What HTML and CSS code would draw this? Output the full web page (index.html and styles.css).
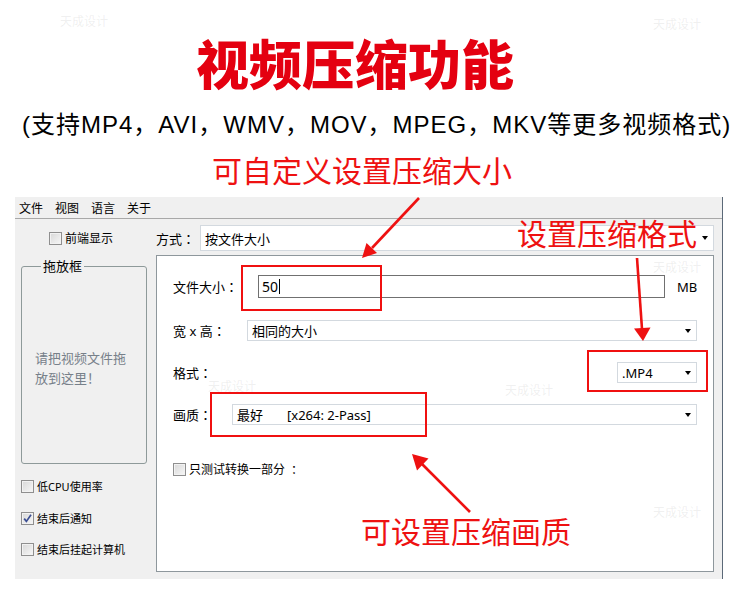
FILE: index.html
```html
<!DOCTYPE html>
<html>
<head>
    <title>视频压缩功能</title>
    <link rel="stylesheet" href="styles.css">
</head>
<body>
<div class="page">
    <header class="head">
        <h1 class="title">视频压缩功能</h1>
        <p class="subtitle">(支持MP4，AVI，WMV，MOV，MPEG，MKV等更多视频格式)</p>
        <p class="tip">可自定义设置压缩大小</p>
    </header>

    <div class="window">
        <nav class="menubar">
            <span>文件</span>
            <span>视图</span>
            <span>语言</span>
            <span>关于</span>
        </nav>
        <div class="client">
            <aside class="side">
                <label class="check front"><span class="box"></span>前端显示</label>
                <fieldset class="dropzone">
                    <legend>拖放框</legend>
                    <p>请把视频文件拖<br>放到这里！</p>
                </fieldset>
                <div class="side-options">
                    <label class="check small"><span class="box"></span>低CPU使用率</label>
                    <label class="check small">
                        <span class="box">
                            <svg width="11" height="11" viewBox="0 0 11 11"><path d="M2.2 5.6 L4.4 8.4 L9 1.8" fill="none" stroke="#3c4f93" stroke-width="1.7"/></svg>
                        </span>结束后通知
                    </label>
                    <label class="check small"><span class="box"></span>结束后挂起计算机</label>
                </div>
            </aside>

            <section class="main">
                <div class="mode">
                    <span class="label">方式<span class="colon">：</span></span>
                    <div class="combo combo-mode">按文件大小</div>
                </div>
                <div class="panel">
                    <div class="row row-size">
                        <span class="label">文件大小<span class="colon">：</span></span>
                        <div class="input">50<span class="caret"></span></div>
                        <span class="unit">MB</span>
                    </div>
                    <div class="row">
                        <span class="label">宽 x 高<span class="colon">：</span></span>
                        <div class="combo combo-dim">相同的大小</div>
                    </div>
                    <div class="row">
                        <span class="label">格式<span class="colon">：</span></span>
                        <div class="combo combo-format">.MP4</div>
                    </div>
                    <div class="row">
                        <span class="label">画质<span class="colon">：</span></span>
                        <div class="combo combo-quality">最好<span class="codec">[x264: 2-Pass]</span></div>
                    </div>
                    <label class="check part"><span class="box"></span>只测试转换一部分<span class="colon">：</span></label>
                </div>
            </section>
        </div>
    </div>

    <!-- annotations drawn over the screenshot -->
    <div class="mark mark-size"></div>
    <div class="mark mark-format"></div>
    <div class="mark mark-quality"></div>
    <span class="note note-format">设置压缩格式</span>
    <span class="note note-quality">可设置压缩画质</span>

    <svg class="arrows" width="750" height="600" viewBox="0 0 750 600">
        <g stroke="#ee1111" stroke-width="2.6" fill="none">
            <line x1="419" y1="198" x2="372" y2="248"/>
            <line x1="637" y1="258" x2="642" y2="329"/>
            <line x1="470" y1="512" x2="422" y2="464"/>
        </g>
        <g fill="#ee1111">
            <polygon points="362,258 377,253 366.5,243"/>
            <polygon points="643,341 650.5,327.4 634,328.6"/>
            <polygon points="412,454 428.5,458.5 417,470.5"/>
        </g>
    </svg>

    <span class="wm" style="left:60px;top:13px">天成设计</span>
    <span class="wm" style="left:653px;top:16px">天成设计</span>
    <span class="wm" style="left:653px;top:259px">天成设计</span>
    <span class="wm" style="left:208px;top:378px">天成设计</span>
    <span class="wm" style="left:505px;top:382px">天成设计</span>
    <span class="wm" style="left:653px;top:504px">天成设计</span>
</div>
</body>
</html>
```

FILE: styles.css
```css
body {
    margin: 0;
    background: #fff;
    font-family: "Noto Sans", "Noto Sans CJK SC", sans-serif;
    color: #000;
}
.page {
    position: relative;
    width: 750px;
    height: 600px;
    overflow: hidden;
}

/* heading */
.head {
    padding-top: 36px;
}
.title {
    margin: 0 0 0 196px;
    font-family: "Noto Sans CJK SC", sans-serif;
    font-size: 53px;
    line-height: 53px;
    font-weight: 900;
    color: #e40010;
}
.subtitle {
    margin: 21px 0 0 22px;
    font-family: "Liberation Sans", "Noto Sans CJK SC", sans-serif;
    font-size: 24px;
    line-height: 30px;
    letter-spacing: 1px;
    white-space: nowrap;
}
.tip {
    margin: 14px 0 0 212px;
    font-family: "Noto Sans CJK SC", sans-serif;
    font-size: 30px;
    line-height: 30px;
    color: #ee1111;
}

/* app window */
.window {
    margin: 13px 0 0 15px;
    width: 708px;
    height: 382px;
    box-sizing: border-box;
    background: #f0f0f0;
    border-right: 1px solid #5b6978;
}
.menubar {
    display: flex;
    gap: 12px;
    height: 21px;
    padding-left: 4px;
    border-bottom: 1px solid #a8a8a8;
    align-items: center;
    font-size: 12px;
}
.client {
    display: flex;
}
.side {
    width: 141px;
    padding-left: 6px;
    box-sizing: border-box;
}
.main {
    flex: 1;
    padding-right: 8px;
}

/* centred full-width colon, as on the Windows UI font */
.colon {
    font-family: "Noto Sans CJK JP", sans-serif;
}

/* checkboxes */
.check {
    display: flex;
    align-items: center;
    gap: 3px;
    height: 13px;
    font-size: 12px;
    line-height: 13px;
    white-space: nowrap;
}
.check.small {
    font-size: 11px;
}
.box {
    display: flex;
    align-items: center;
    justify-content: center;
    width: 13px;
    height: 13px;
    box-sizing: border-box;
    border: 1px solid #8f8f8f;
    background: linear-gradient(135deg, #d8d8d8, #f7f7f7);
    box-shadow: inset 0 0 0 1px #f2f2f2;
    flex: none;
}
.front {
    margin-top: 13px;
    padding-left: 28px;
}
.side-options {
    display: flex;
    flex-direction: column;
    gap: 18.5px;
    margin-top: 16px;
}

/* drop box */
.dropzone {
    margin: 13px 0 0;
    padding: 0 0 0 13px;
    width: 126px;
    height: 206px;
    box-sizing: border-box;
    border: 1px solid #8e9a9a;
    border-radius: 3px;
    min-inline-size: 0;
}
.dropzone legend {
    margin-left: 6px;
    padding: 0 2px;
    font-size: 13px;
    line-height: 16px;
}
.dropzone p {
    margin: 0;
    padding-top: 75px;
    font-size: 13px;
    line-height: 19.5px;
    color: #77808a;
}

/* right side */
.label {
    font-size: 13px;
    white-space: nowrap;
}
.mode {
    display: flex;
    align-items: center;
    margin-top: 6px;
    height: 26px;
}
.combo {
    display: flex;
    align-items: center;
    height: 21px;
    box-sizing: border-box;
    padding: 0 5px 0 4px;
    background: #fff;
    border: 1px solid #d3d9df;
    font-size: 13px;
    white-space: nowrap;
    margin-left: auto;
}
.combo::after {
    content: "";
    margin-left: auto;
    border-left: 3.5px solid transparent;
    border-right: 3.5px solid transparent;
    border-top: 4px solid #000;
}
.combo-mode {
    width: 514px;
    height: 26px;
}
.combo-dim {
    width: 450px;
}
.combo-format {
    width: 80px;
}
.combo-quality {
    width: 465px;
}
.codec {
    margin-left: 24px;
}

.panel {
    margin-top: 4px;
    height: 317px;
    box-sizing: border-box;
    padding: 0 16px;
    background: #fff;
    border: 1px solid #8e979c;
}
.row {
    display: flex;
    align-items: center;
    height: 21px;
    margin-top: 21px;
}
.row-size {
    height: 23px;
    margin-top: 19px;
}
.row-size + .row {
    margin-top: 22px;
}
.input {
    display: flex;
    align-items: center;
    width: 407px;
    height: 23px;
    box-sizing: border-box;
    margin-left: auto;
    padding-left: 3px;
    border: 1px solid #707070;
    font-size: 14px;
}
.caret {
    width: 1px;
    height: 15px;
    margin-left: 1px;
    background: #000;
}
.unit {
    width: 20px;
    margin-left: 12px;
    font-size: 13px;
}
.part {
    margin-top: 38px;
}

/* annotations */
.mark {
    position: absolute;
    box-sizing: border-box;
    border: 2px solid #f01010;
}
.mark-size {
    left: 241px;
    top: 265px;
    width: 141px;
    height: 46px;
}
.mark-format {
    left: 587px;
    top: 350px;
    width: 121px;
    height: 42px;
}
.mark-quality {
    left: 210px;
    top: 392px;
    width: 217px;
    height: 45px;
}
.note {
    position: absolute;
    font-family: "Noto Sans CJK SC", sans-serif;
    font-size: 30px;
    line-height: 30px;
    color: #ee1111;
    white-space: nowrap;
}
.note-format {
    left: 517px;
    top: 217px;
}
.note-quality {
    left: 361px;
    top: 515px;
}
.arrows {
    position: absolute;
    left: 0;
    top: 0;
    pointer-events: none;
}
.wm {
    position: absolute;
    font-family: "Noto Sans CJK SC", sans-serif;
    font-size: 12px;
    line-height: 16px;
    color: rgba(140, 140, 140, 0.14);
    pointer-events: none;
}
```
